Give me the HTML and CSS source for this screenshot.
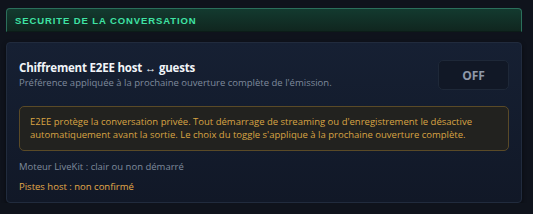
FILE: index.html
```html
<!DOCTYPE html>
<html lang="fr">
<head>
    <meta charset="UTF-8">
    <title>Sécurité de la conversation</title>
    <link rel="stylesheet" href="styles.css">
</head>
<body>
    <div class="section">
        <div class="section-head">SECURITE DE LA CONVERSATION</div>

        <div class="card">
            <div class="toggle-row">
                <div class="toggle-info">
                    <div class="toggle-title">Chiffrement E2EE host ↔ guests</div>
                    <div class="toggle-sub">Préférence appliquée à la prochaine ouverture complète de l'émission.</div>
                </div>
                <button class="toggle-btn">OFF</button>
            </div>

            <div class="warning">
                E2EE protège la conversation privée. Tout démarrage de streaming ou d'enregistrement le désactive
                automatiquement avant la sortie. Le choix du toggle s'applique à la prochaine ouverture complète.
            </div>

            <div class="status muted">Moteur LiveKit : clair ou non démarré</div>
            <div class="status warn">Pistes host : non confirmé</div>
        </div>
    </div>
</body>
</html>
```

FILE: styles.css
```css
body {
    margin: 0;
    padding: 8px 11px 0 6px;
    background-color: #0f131c;
    font-family: "Open Sans", "Noto Sans", sans-serif;
    color: #e5e9f0;
}
.section-head {
    height: 22px;
    padding-left: 8px;
    display: flex;
    align-items: center;
    border: 1px solid #2b6f5b;
    border-bottom-color: #0c1c18;
    border-radius: 4px 4px 0 0;
    background: linear-gradient(180deg, #133a2f 0%, #10261f 100%);
    color: #3fe3a4;
    font-family: "Liberation Sans", Arial, sans-serif;
    font-weight: bold;
    font-size: 9.5px;
    letter-spacing: 0.9px;
}
.card {
    margin-top: 10px;
    height: 161px;
    box-sizing: border-box;
    padding: 15px 12px 0 12px;
    background: linear-gradient(180deg, #162033 0%, #111827 100%);
    border: 1px solid #212b3d;
    border-radius: 4px;
    box-shadow: 0 2px 4px rgba(0, 0, 0, 0.5);
}
.toggle-row {
    display: flex;
    justify-content: space-between;
    align-items: flex-start;
}
.toggle-title {
    font-size: 11.5px;
    font-weight: bold;
    color: #f1f4f8;
    line-height: 16px;
    margin-top: 2px;
    letter-spacing: -0.2px;
}
.toggle-sub {
    font-size: 9.5px;
    color: #7f8a9c;
    line-height: 14px;
}
.toggle-btn {
    width: 71px;
    height: 30px;
    margin-top: 2px;
    background-color: #111826;
    border: 1px solid #1e2838;
    border-radius: 5px;
    color: #8f99a9;
    font-family: "Open Sans", sans-serif;
    font-weight: bold;
    font-size: 12px;
    cursor: pointer;
}
.warning {
    margin-top: 16px;
    padding: 9px 10px;
    background-color: #22221f;
    border: 1px solid #5a4a27;
    border-radius: 5px;
    color: #d9a443;
    font-size: 9.5px;
    line-height: 12.5px;
}
.status {
    font-size: 9.5px;
    line-height: 14px;
}
.muted {
    margin-top: 9px;
    color: #7f8a9c;
}
.warn {
    margin-top: 6px;
    color: #e3aa49;
}
```
